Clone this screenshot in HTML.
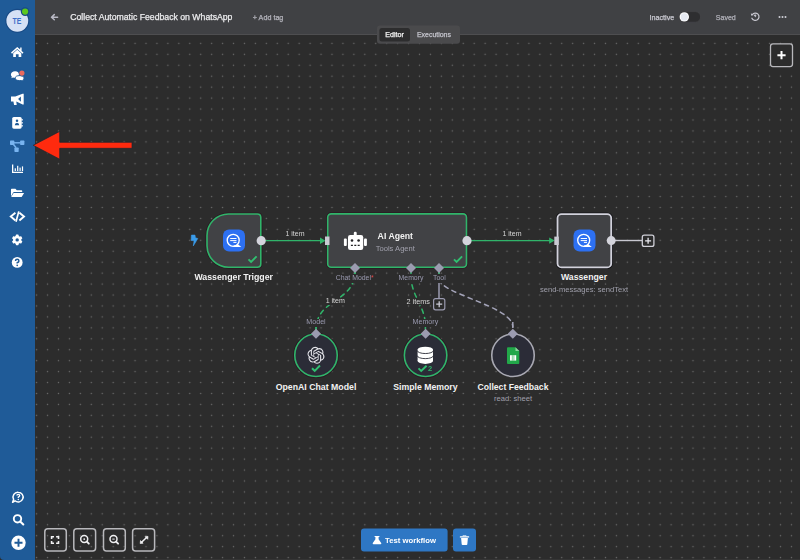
<!DOCTYPE html>
<html><head><meta charset="utf-8">
<style>
*{margin:0;padding:0;box-sizing:border-box}
html,body{width:800px;height:560px;overflow:hidden;background:#2c2c2c;font-family:"Liberation Sans",sans-serif}
#side{position:absolute;left:0;top:0;width:35px;height:560px;background:#1f5b98;border-bottom-left-radius:4px}
#head{position:absolute;left:35px;top:0;width:765px;height:35px;background:#404144;border-bottom:1px solid #4e4e50}
svg{position:absolute;left:0;top:0}
.t{position:absolute;white-space:nowrap;line-height:1;transform:translateZ(0)}
.c{position:absolute;white-space:nowrap;line-height:1;transform:translateX(-50%) translateZ(0)}
.b{font-weight:700}
.m{-webkit-text-stroke:0.25px currentColor}
</style></head><body>
<!-- CANVAS -->
<svg id="cv" width="800" height="560">
<defs>
<pattern id="dots" patternUnits="userSpaceOnUse" width="10.94" height="10.94" x="31.13" y="37.93">
<circle cx="5.47" cy="5.47" r="0.75" fill="#6a6a6a"/></pattern>
</defs>
<rect x="35" y="35" width="765" height="525" fill="url(#dots)"/>

<!-- sub edges -->
<path d="M355 271 C355 303 316 298 316 330" fill="none" stroke="#30b46a" stroke-width="1.5" stroke-dasharray="4.4 4.4" stroke-linecap="round"/>
<path d="M411 276 C411 296 425.4 306 425.4 326" fill="none" stroke="#30b46a" stroke-width="1.5" stroke-dasharray="4.4 4.4" stroke-linecap="round"/>
<path d="M439.5 279 C439.5 294 512.8 306 512.8 327" fill="none" stroke="#a3a3b8" stroke-width="1.5" stroke-dasharray="4.4 4.4" stroke-linecap="round"/>
<line x1="439" y1="272" x2="439" y2="298.5" stroke="#9b9bb0" stroke-width="1.5"/>
<rect x="433.6" y="298.6" width="11.2" height="11.2" rx="2" fill="#2c2c2c" stroke="#9b9bb0" stroke-width="1.2"/>
<path d="M439.2 301.2v6M436.2 304.2h6" stroke="#c8c8d4" stroke-width="1.3"/>

<path d="M355 272v3M411 272v3M439 272v3M316 324.5v5M425.4 324.5v5" stroke="#30b46a" stroke-width="1.5"/>
<path d="M512.8 322v6" stroke="#a3a3b8" stroke-width="1.5"/>
<!-- main edges -->
<line x1="265" y1="240.6" x2="321" y2="240.6" stroke="#30b46a" stroke-width="1.4"/>
<path d="M320 237.4 L325.5 240.7 L320 244Z" fill="#30b46a"/>

<line x1="471" y1="240.6" x2="550" y2="240.6" stroke="#30b46a" stroke-width="1.4"/>
<path d="M549.2 237.4 L554.7 240.6 L549.2 243.8Z" fill="#30b46a"/>

<line x1="615" y1="240.5" x2="642" y2="240.5" stroke="#c8c8d0" stroke-width="1.4"/>
<rect x="642.3" y="235.2" width="11.6" height="11.2" rx="2" fill="#2c2c2c" stroke="#d0d0d8" stroke-width="1.3"/>
<path d="M648.1 237.8v6M645.1 240.8h6" stroke="#e8e8ee" stroke-width="1.3"/>

<!-- trigger node -->
<path d="M228.5 214 H257.3 Q260.8 214 260.8 217.5 V263.7 Q260.8 267.2 257.3 267.2 H228.5 A21.5 21.5 0 0 1 207 245.7 V235.5 A21.5 21.5 0 0 1 228.5 214Z" fill="#414245" stroke="#2a1a22" stroke-width="3.2"/><path d="M228.5 214 H257.3 Q260.8 214 260.8 217.5 V263.7 Q260.8 267.2 257.3 267.2 H228.5 A21.5 21.5 0 0 1 207 245.7 V235.5 A21.5 21.5 0 0 1 228.5 214Z" fill="#414245" stroke="#30b46a" stroke-width="1.6"/>
<g transform="translate(0 0)"><rect x="223" y="229.5" width="22" height="22" rx="6" fill="#2d70f2"/>
<circle cx="233.2" cy="240.3" r="6" fill="none" stroke="#fff" stroke-width="1.35"/>
<path d="M233.5 245.6 L238.2 244.5 L241.3 246.9 L233.5 247Z" fill="#fff"/>
<path d="M230.2 238.5h6.3M230.2 240.6h6.3M233.4 242.4h3.1" stroke="#fff" stroke-width="1"/></g>
<path d="M248.5 259.3 L251.1 261.9 L256.6 256.4" fill="none" stroke="#30c070" stroke-width="1.9"/>
<circle cx="261.2" cy="240.7" r="4.6" fill="#d4d4dc"/>
<path d="M191.4 235.1 L195 235.1 L195.4 237.8 L197.8 238.5 L193.3 245.9 L194.1 240.8 L191.1 240.4Z" fill="#3a9be8" stroke="#3a9be8" stroke-width="0.6" stroke-linejoin="round"/>

<!-- AI agent node -->
<rect x="327.7" y="213.9" width="138.8" height="53.3" rx="3.5" fill="#414245" stroke="#2a1a22" stroke-width="3.2"/><rect x="327.7" y="213.9" width="138.8" height="53.3" rx="3.5" fill="#414245" stroke="#30b46a" stroke-width="1.6"/>
<rect x="348" y="235" width="15.2" height="15" rx="2.2" fill="#fff"/>
<rect x="353.8" y="231.7" width="2.9" height="4" rx="1.2" fill="#fff"/>
<rect x="343.9" y="238.6" width="2.9" height="7.5" rx="1" fill="#fff"/>
<rect x="364" y="238.6" width="2.9" height="7.5" rx="1" fill="#fff"/>
<circle cx="352" cy="240.5" r="1.3" fill="#222224"/>
<circle cx="358.6" cy="240.5" r="1.3" fill="#222224"/>
<path d="M350.9 245.4h2M354.3 245.4h2M357.7 245.4h2" stroke="#222224" stroke-width="1.1"/>
<path d="M454 259.3 L456.6 261.9 L462.1 256.4" fill="none" stroke="#30c070" stroke-width="1.9"/>
<circle cx="467" cy="240.7" r="4.6" fill="#d4d4dc"/>
<!-- diamonds on agent -->
<path d="M355 263 L360 268 L355 273 L350 268Z" fill="#9b9bb0"/>
<path d="M411 263 L416 268 L411 273 L406 268Z" fill="#9b9bb0"/>
<path d="M439 263 L444 268 L439 273 L434 268Z" fill="#9b9bb0"/>

<!-- wassenger node -->
<rect x="557.5" y="214.1" width="53.7" height="53.3" rx="4" fill="#414245" stroke="#151518" stroke-width="3.4"/><rect x="557.5" y="214.1" width="53.7" height="53.3" rx="4" fill="#414245" stroke="#d2d2dc" stroke-width="1.8"/>
<g transform="translate(350.5 0)"><rect x="223" y="229.5" width="22" height="22" rx="6" fill="#2d70f2"/>
<circle cx="233.2" cy="240.3" r="6" fill="none" stroke="#fff" stroke-width="1.35"/>
<path d="M233.5 245.6 L238.2 244.5 L241.3 246.9 L233.5 247Z" fill="#fff"/>
<path d="M230.2 238.5h6.3M230.2 240.6h6.3M233.4 242.4h3.1" stroke="#fff" stroke-width="1"/></g>
<circle cx="611.2" cy="240.6" r="4.5" fill="#d4d4dc"/>

<rect x="325" y="236.5" width="4.5" height="8.5" fill="#c9c9d2"/>
<rect x="554.3" y="236.6" width="4.5" height="8.4" fill="#c9c9d2"/>
<!-- sub nodes -->
<circle cx="316" cy="355.25" r="21.25" fill="#2b2c37" stroke="#2a1a22" stroke-width="3.2"/><circle cx="316" cy="355.25" r="21.25" fill="#2b2c37" stroke="#30b46a" stroke-width="1.6"/>
<circle cx="425.6" cy="355.25" r="21.25" fill="#2b2c37" stroke="#2a1a22" stroke-width="3.2"/><circle cx="425.6" cy="355.25" r="21.25" fill="#2b2c37" stroke="#30b46a" stroke-width="1.6"/>
<circle cx="513" cy="355.25" r="21.25" fill="#2b2c37" stroke="#a8a8b2" stroke-width="1.6"/>
<path d="M316 328.7 L321 333.7 L316 338.7 L311 333.7Z" fill="#9b9bb0"/>
<path d="M425.6 328.7 L430.6 333.7 L425.6 338.7 L420.6 333.7Z" fill="#9b9bb0"/>
<path d="M512.8 328.7 L517.8 333.7 L512.8 338.7 L507.8 333.7Z" fill="#9b9bb0"/>
<path d="M312 368.2 L314.7 370.8 L320 365.5" fill="none" stroke="#30c070" stroke-width="1.9"/>
<path d="M418.5 368.4 L421.2 371 L426.6 365.8" fill="none" stroke="#30c070" stroke-width="1.9"/>
<!-- openai logo -->
<path transform="translate(307.5 346.8) scale(0.708)" fill="#e4e4ea" d="M22.2819 9.8211a5.9847 5.9847 0 0 0-.5157-4.9108 6.0462 6.0462 0 0 0-6.5098-2.9A6.0651 6.0651 0 0 0 4.9807 4.1818a5.9847 5.9847 0 0 0-3.9977 2.9 6.0462 6.0462 0 0 0 .7427 7.0966 5.98 5.98 0 0 0 .511 4.9107 6.051 6.051 0 0 0 6.5146 2.9001A5.9847 5.9847 0 0 0 13.2599 24a6.0557 6.0557 0 0 0 5.7718-4.2058 5.9894 5.9894 0 0 0 3.9977-2.9001 6.0557 6.0557 0 0 0-.7475-7.0729zm-9.022 12.6081a4.4755 4.4755 0 0 1-2.8764-1.0408l.1419-.0804 4.7783-2.7582a.7948.7948 0 0 0 .3927-.6813v-6.7369l2.02 1.1686a.071.071 0 0 1 .038.052v5.5826a4.504 4.504 0 0 1-4.4945 4.4944zm-9.6607-4.1254a4.4708 4.4708 0 0 1-.5346-3.0137l.142.0852 4.783 2.7582a.7712.7712 0 0 0 .7806 0l5.8428-3.3685v2.3324a.0804.0804 0 0 1-.0332.0615L9.74 19.9502a4.4992 4.4992 0 0 1-6.1408-1.6464zM2.3408 7.8956a4.485 4.485 0 0 1 2.3655-1.9728V11.6a.7664.7664 0 0 0 .3879.6765l5.8144 3.3543-2.0201 1.1685a.0757.0757 0 0 1-.071 0l-4.8303-2.7865A4.504 4.504 0 0 1 2.3408 7.872zm16.5963 3.8558L13.1038 8.364 15.1192 7.2a.0757.0757 0 0 1 .071 0l4.8303 2.7913a4.4944 4.4944 0 0 1-.6765 8.1042v-5.6772a.79.79 0 0 0-.407-.667zm2.0107-3.0231l-.142-.0852-4.7735-2.7818a.7759.7759 0 0 0-.7854 0L9.409 9.2297V6.8974a.0662.0662 0 0 1 .0284-.0615l4.8303-2.7866a4.4992 4.4992 0 0 1 6.6802 4.66zM8.3065 12.863l-2.02-1.1638a.0804.0804 0 0 1-.038-.0567V6.0742a4.4992 4.4992 0 0 1 7.3757-3.4537l-.142.0805L8.704 5.459a.7948.7948 0 0 0-.3927.6813zm1.0976-2.3654l2.602-1.4998 2.6069 1.4998v2.9994l-2.5974 1.4997-2.6067-1.4997Z"/>
<!-- database -->
<g fill="#fff">
<ellipse cx="425.3" cy="349.5" rx="7.7" ry="2.8"/>
<rect x="417.6" y="349.5" width="15.4" height="11.6"/>
<ellipse cx="425.3" cy="361.1" rx="7.7" ry="2.8"/>
</g>
<g fill="none" stroke="#2b2c37" stroke-width="0.9">
<path d="M417.3 350.6 A7.9 2.9 0 0 0 433.3 350.6"/>
<path d="M417.3 355.7 A7.9 2.9 0 0 0 433.3 355.7"/>
</g>
<!-- sheets -->
<path d="M508 347.2 H515.5 L519.3 351 V362.9 Q519.3 363.9 518.3 363.9 H508 Q507 363.9 507 362.9 V348.2 Q507 347.2 508 347.2Z" fill="#22a84a"/>
<path d="M515.5 347.2 V351 H519.3Z" fill="#8ed5a0"/>
<rect x="510" y="355.2" width="6.2" height="5.4" fill="#fff"/>
<path d="M512.3 355.2v5.4M513.9 355.2v5.4" stroke="#22a84a" stroke-width="0.6"/>
</svg>

<!-- canvas texts -->
<div class="c" style="left:295px;top:230.4px;font-size:7px;color:#d6d6d6">1 item</div>
<div class="c" style="left:512px;top:230.4px;font-size:7px;color:#d6d6d6">1 item</div>
<div class="c b" style="left:233.7px;top:271.6px;font-size:8.77px;color:#f2f2f2;background:#2c2c2c;padding:1px 1px">Wassenger Trigger</div>
<div class="c b" style="left:395.3px;top:231.6px;font-size:8.7px;color:#f2f2f2">AI Agent</div>
<div class="c" style="left:395.3px;top:244.6px;font-size:7.6px;color:#a0a0ac">Tools Agent</div>
<div class="c b" style="left:584px;top:271.5px;font-size:8.7px;color:#f2f2f2;background:#2c2c2c;padding:1px 1px">Wassenger</div>
<div class="c" style="left:584px;top:285px;font-size:7.6px;color:#a0a0ac;background:#2c2c2c;padding:0.5px 1px">send-messages: sendText</div>
<div class="t" style="left:335.7px;top:274.2px;font-size:6.9px;color:#9a9ab0;background:#2c2c2c;padding:0.5px 0 1px">Chat Model<span style="color:#e04848">*</span></div>
<div class="c" style="left:411px;top:274.2px;font-size:6.9px;color:#9a9ab0;background:#2c2c2c;padding:0.5px 0 1px">Memory</div>
<div class="c" style="left:439.4px;top:274.2px;font-size:6.9px;color:#9a9ab0;background:#2c2c2c;padding:0.5px 0 1px">Tool</div>
<div class="c" style="left:335.3px;top:297.6px;font-size:7.1px;color:#d6d6d6;background:#2c2c2c">1 item</div>
<div class="c" style="left:418.2px;top:297.6px;font-size:7.3px;color:#d6d6d6;background:#2c2c2c">2 items</div>
<div class="c" style="left:316px;top:318.6px;font-size:7.1px;color:#9a9ab0;background:#2c2c2c;padding:0.5px 0 1px">Model</div>
<div class="c" style="left:425.4px;top:318.6px;font-size:7.1px;color:#9a9ab0;background:#2c2c2c;padding:0.5px 0 1px">Memory</div>
<div class="c b" style="left:316px;top:381.9px;font-size:8.75px;color:#f2f2f2;background:#2c2c2c;padding:1px 1px">OpenAI Chat Model</div>
<div class="c b" style="left:425.4px;top:381.9px;font-size:8.73px;color:#f2f2f2;background:#2c2c2c;padding:1px 1px">Simple Memory</div>
<div class="c b" style="left:513px;top:381.9px;font-size:8.65px;color:#f2f2f2;background:#2c2c2c;padding:1px 1px">Collect Feedback</div>
<div class="c" style="left:513px;top:394.4px;font-size:7.6px;color:#a0a0ac;background:#2c2c2c;padding:0.5px 1px">read: sheet</div>
<div class="t b" style="left:427.9px;top:365px;font-size:7.5px;color:#30b46a">2</div>

<!-- HEADER -->
<div id="head"></div>
<svg width="800" height="70">
<path d="M57.6 17.2 H51.6 M54.3 14.6 L51.5 17.2 L54.3 19.8" fill="none" stroke="#b8b8c4" stroke-width="1.5" stroke-linecap="round" stroke-linejoin="round"/>
<rect x="377" y="25.6" width="83" height="18.2" rx="3" fill="#4a4a4c"/>
<rect x="379.4" y="28.1" width="30.6" height="13.4" rx="2.5" fill="#2d2d2e"/>
<rect x="679.2" y="11.6" width="21.4" height="10.6" rx="5.3" fill="#2e2e30" stroke="#48484c" stroke-width="0.6"/>
<circle cx="684.3" cy="16.9" r="4.7" fill="#fff"/>
<circle cx="684.3" cy="16.9" r="3.6" fill="#e6eaf2"/>
<g fill="none" stroke="#c8c8d0" stroke-width="1.2" stroke-linecap="round">
<path d="M752.3 14.6 A3.7 3.7 0 1 1 751.9 18.2"/>
</g>
<path d="M755.6 16.8 L753.9 15.2 L755.9 14.9Z" fill="#c8c8d0" stroke="#c8c8d0" stroke-width="0.8"/>
<path d="M750.9 13.3 L751.2 15.8 L753.6 15Z" fill="#c8c8d0"/>
<circle cx="779.5" cy="17" r="1" fill="#d0d0d8"/><circle cx="782.5" cy="17" r="1" fill="#d0d0d8"/><circle cx="785.5" cy="17" r="1" fill="#d0d0d8"/>
<rect x="770.5" y="43.8" width="22" height="22.8" rx="2.5" fill="#2c2c2c" stroke="#b8b8bc" stroke-width="1.3"/>
<path d="M781.5 51.1v8.2M777.4 55.2h8.2" stroke="#fff" stroke-width="2"/>
</svg>
<div class="t m" style="left:70.2px;top:12.8px;font-size:8.7px;color:#ececee">Collect Automatic Feedback on WhatsApp</div>
<div class="t m" style="left:252.8px;top:13.5px;font-size:7.2px;color:#b4b4bc">+ Add tag</div>
<div class="t m" style="left:385.3px;top:32px;font-size:7.08px;color:#f4f4f4">Editor</div>
<div class="t m" style="left:416.9px;top:32px;font-size:6.97px;color:#c4c4cc">Executions</div>
<div class="t m" style="left:649.5px;top:14.1px;font-size:7.2px;color:#c8c8d0">Inactive</div>
<div class="t m" style="left:715.8px;top:13.5px;font-size:7.05px;color:#b0b0b8">Saved</div>

<div style="position:absolute;left:35px;top:559px;width:765px;height:1px;background:#353535"></div>
<!-- SIDEBAR -->
<div id="side"></div>
<svg width="35" height="560">
<circle cx="17.3" cy="20.8" r="12" fill="#174a86"/>
<circle cx="17.3" cy="20.8" r="10.9" fill="#d5e1f5"/>
<circle cx="25.1" cy="11.6" r="4.3" fill="#174a86"/>
<circle cx="25.1" cy="11.6" r="3.1" fill="#5cc81e"/>
<g fill="#fff">
<!-- home -->
<path d="M17.25 47 L11 52.6 L12 53.7 L17.25 49.1 L22.5 53.7 L23.5 52.6 L21.6 50.9 V47.6 H20.2 V49.6Z"/>
<path d="M13.2 53.2 L17.25 49.8 L21.3 53.2 V57 H18.6 V54.3 H15.9 V57 H13.2Z"/>
<!-- comments -->
<path d="M15.1 71.2 C17.6 71.2 19.3 72.6 19.3 74.6 C19.3 76.6 17.6 78 15.1 78 C14.3 78 13.6 77.9 13 77.6 L11.3 78.3 L11.9 76.7 C11.2 76.1 10.9 75.4 10.9 74.6 C10.9 72.6 12.6 71.2 15.1 71.2Z"/>
<path d="M19.6 75.6 C22.3 75.6 24.1 76.6 24.1 78.1 C24.1 78.9 23.6 79.5 22.9 79.9 L23.5 80.9 L21.4 80.5 C20.8 80.6 20.2 80.6 19.6 80.6 C16.9 80.6 15.1 79.6 15.1 78.1 C15.1 76.6 16.9 75.6 19.6 75.6Z" stroke="#1f5b98" stroke-width="0.9"/>
<!-- bullhorn -->
<path d="M11 96.6 H15.3 L22.6 93.8 H23.7 V104.4 H22.6 L16.3 101.6 L16.7 105 H14.1 L13.4 101.6 H11Z"/>
<path d="M18.1 99 L20.9 96.4 V101.7Z" fill="#1f5b98"/>
<!-- address book -->
<rect x="12.2" y="117" width="9.5" height="11.7" rx="1.6"/>
<rect x="21.4" y="119" width="1.4" height="1.6" rx="0.4"/>
<rect x="21.4" y="122" width="1.4" height="1.6" rx="0.4"/>
<rect x="21.4" y="125" width="1.4" height="1.6" rx="0.4"/>
<!-- chart -->
<path d="M12 164.5 H13.3 V171.8 H23 V173.1 H12Z"/>
<rect x="14.7" y="168.3" width="1.2" height="2.7"/>
<rect x="17.1" y="165.8" width="1.2" height="5.2"/>
<rect x="19.5" y="167.6" width="1.2" height="3.4"/>
<rect x="21.9" y="166.4" width="1.2" height="4.6"/>
<!-- folder open -->
<path d="M11 189.5 Q11 188.8 11.7 188.8 H15.4 L16.8 190.2 H21.5 Q22.2 190.2 22.2 190.9 V192 H14.2 Q13.4 192 13 192.8 L11 196.5Z"/>
<path d="M13.6 193 H24.1 L21.6 196.9 H11.2Z"/>
<!-- code -->
<path d="M15.4 212.8 L10.8 216.6 L15.4 220.4" fill="none" stroke="#fff" stroke-width="1.9"/>
<path d="M19.4 212.8 L24 216.6 L19.4 220.4" fill="none" stroke="#fff" stroke-width="1.9"/>
<path d="M18.8 211.4 L16 221.8" fill="none" stroke="#fff" stroke-width="1.7"/>
<!-- cog -->
<g transform="translate(17.2 239.9)">
<circle r="4.2"/>
<rect x="-1.4" y="-5.3" width="2.8" height="10.6" rx="0.6"/>
<rect x="-1.4" y="-5.3" width="2.8" height="10.6" rx="0.6" transform="rotate(60)"/>
<rect x="-1.4" y="-5.3" width="2.8" height="10.6" rx="0.6" transform="rotate(120)"/>
<circle r="1.7" fill="#1f5b98"/>
</g>
<!-- question -->
<circle cx="17.2" cy="262.4" r="5.4"/>
<!-- bottom: chat question -->
<path d="M18.3 492.2 a4.9 4.9 0 1 1 -3.3 8.6 L12.6 502.3 L13.6 499.4 a4.9 4.9 0 0 1 4.7 -7.2Z" fill="none" stroke="#fff" stroke-width="1.5" stroke-linejoin="round"/>
<!-- plus circle -->
<circle cx="18.5" cy="542.8" r="7.2"/>
</g>
<text x="12.6" y="24.3" font-family="Liberation Sans" font-weight="700" font-size="8.4" fill="#3d70c8" textLength="8.8" lengthAdjust="spacingAndGlyphs">TE</text>
<!-- address book person -->
<circle cx="17" cy="120.8" r="1.25" fill="#1f5b98"/>
<path d="M14.8 125.2 Q14.8 122.7 17 122.7 Q19.2 122.7 19.2 125.2Z" fill="#1f5b98"/>
<!-- question mark -->
<path d="M15.5 261 Q15.5 259.3 17.2 259.3 Q18.9 259.3 18.9 260.9 Q18.9 262 17.2 262.7 V263.6" fill="none" stroke="#1f5b98" stroke-width="1.5"/>
<circle cx="17.2" cy="265.3" r="0.85" fill="#1f5b98"/>
<path d="M16.9 495.6 Q16.9 494.3 18.3 494.3 Q19.7 494.3 19.7 495.6 Q19.7 496.5 18.3 497.1 V497.9" fill="none" stroke="#fff" stroke-width="1.3"/>
<circle cx="18.3" cy="499.4" r="0.75" fill="#fff"/>
<circle cx="18.2" cy="496.5" r="3.9" fill="none" stroke="#1f5b98" stroke-width="0"/>
<!-- search -->
<circle cx="17.5" cy="518.8" r="3.7" fill="none" stroke="#fff" stroke-width="1.9"/>
<path d="M20.2 521.5 L23.3 524.5" stroke="#fff" stroke-width="2.1" stroke-linecap="round"/>
<!-- plus -->
<path d="M18.5 538.8v8M14.5 542.8h8" stroke="#1f5b98" stroke-width="1.9"/>
<!-- workflow icon -->
<g fill="#78b4f0">
<rect x="10" y="140.6" width="4.3" height="4.4" rx="0.7"/>
<rect x="20.1" y="140.6" width="4.3" height="4.4" rx="0.7"/>
<rect x="14.4" y="147.5" width="4.3" height="4.4" rx="0.7"/>
<path d="M14 142.1 H20.4 V143.5 H14Z"/>
<path d="M12.5 144.5 L15.6 148.2 L16.7 147.3 L13.7 143.6Z"/>
</g>
<path d="M10.6 74 a4.8 3.5 0 0 1 9.4 0" fill="none"/>
<circle cx="21.9" cy="73.1" r="3.3" fill="#1f5b98"/><circle cx="21.9" cy="73.1" r="2.6" fill="#e96a5e"/>
</svg>
<!-- red arrow -->
<svg width="800" height="560" style="pointer-events:none">
<path d="M33.2 145.3 L59.7 131.4 V142.3 H132 V148.3 H59.7 V159.2Z" fill="#ff2a0e" stroke="#1c2630" stroke-width="0.7"/>
</svg>
<!-- bottom toolbar -->
<svg width="800" height="560">
<g fill="none" stroke="#b8b8bc" stroke-width="1.5">
<rect x="44.8" y="528.7" width="21.5" height="22.4" rx="3"/>
<rect x="73.8" y="528.7" width="21.8" height="22.4" rx="3"/>
<rect x="103.5" y="528.7" width="21.8" height="22.4" rx="3"/>
<rect x="132.6" y="528.7" width="22" height="22.4" rx="3"/>
</g>
<g fill="none" stroke="#f0f0f2" stroke-width="1.7">
<path d="M51.6 539 V536.7 H54 M56.1 536.7 H58.5 V539 M58.5 540.9 V543.2 H56.1 M54 543.2 H51.6 V540.9" stroke-width="1.6"/>
<circle cx="84.2" cy="539.1" r="3.5" stroke-width="1.5"/>
<path d="M86.8 541.7 L88.8 543.7" stroke-width="1.9" stroke-linecap="round"/>
<circle cx="84.2" cy="539.1" r="0.9" fill="#f0f0f2" stroke="none"/>
<circle cx="113.5" cy="539.1" r="3.5" stroke-width="1.5"/>
<path d="M116.1 541.7 L118.1 543.7" stroke-width="1.9" stroke-linecap="round"/>
<path d="M112.3 539.1h2.4" stroke-width="1"/>
<path d="M141.6 542.2 L146.8 537.2" stroke-width="1.5"/>
</g>
<path d="M140.2 543.5 L140.5 540.6 L143.1 543.2Z M148 536.4 L147.7 539.3 L145.1 536.7Z" fill="#f0f0f2" stroke="#f0f0f2" stroke-width="0.7" stroke-linejoin="round"/>
<rect x="361" y="528.4" width="86.6" height="23" rx="3" fill="#2e77c4"/>
<rect x="453" y="528.4" width="23" height="23" rx="3" fill="#2e77c4"/>
<path d="M374.6 535.9 H379.4 V536.9 H378.6 V539.2 L381.2 543 Q381.7 544.2 380.5 544.2 H373.5 Q372.3 544.2 372.8 543 L375.4 539.2 V536.9 H374.6Z" fill="#fff"/>
<path d="M460.4 536.9 H468.6" stroke="#fff" stroke-width="1.3" stroke-linecap="round"/>
<path d="M462.9 536.4 V535.7 H466.1 V536.4" fill="none" stroke="#fff" stroke-width="0.7"/>
<path d="M461.1 538.1 H467.9 L467.3 544.3 Q467.2 545 466.5 545 H462.5 Q461.8 545 461.7 544.3Z" fill="#fff"/>
</svg>
<div class="t b" style="left:385px;top:536.9px;font-size:7.73px;color:#fff">Test workflow</div>
</body></html>
